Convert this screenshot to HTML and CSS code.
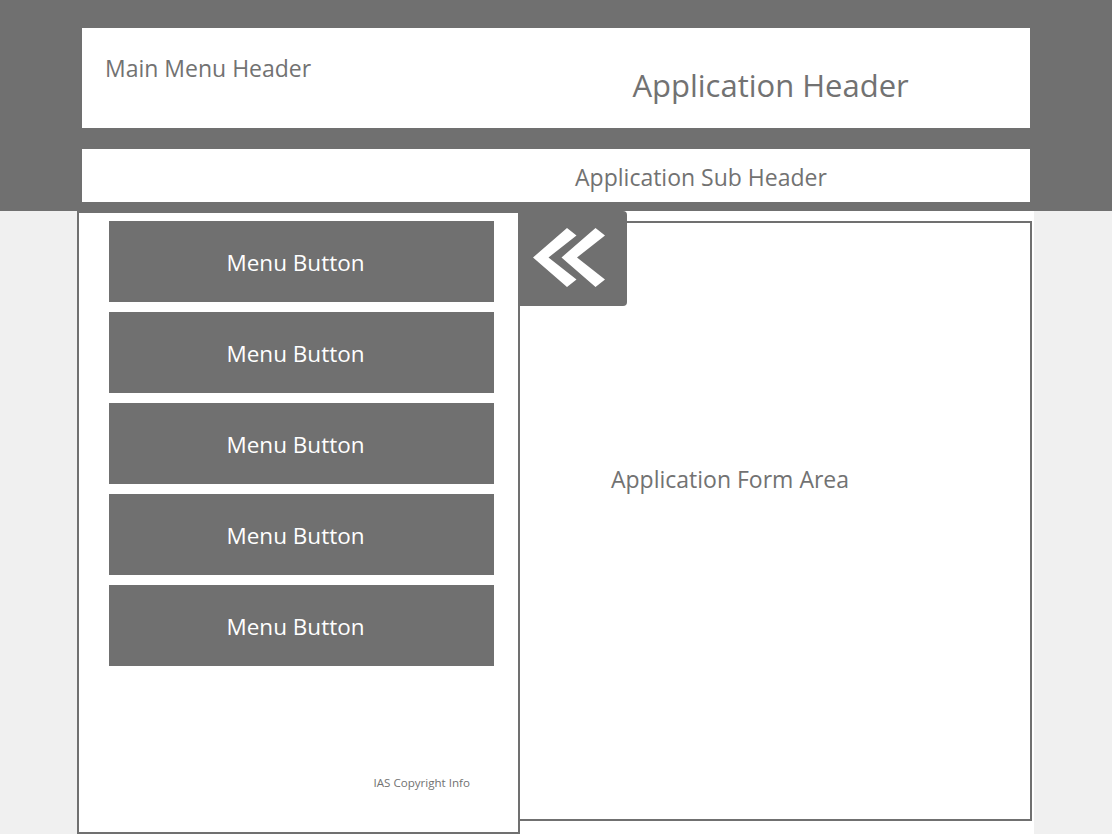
FILE: index.html
```html
<!DOCTYPE html>
<html lang="en">
<head>
<meta charset="utf-8">
<title>Application</title>
<link rel="stylesheet" href="styles.css">
</head>
<body>
<div class="top-band">
  <header class="main-header">
    <div class="menu-title">Main Menu Header</div>
    <div class="app-title">Application Header</div>
  </header>
  <div class="sub-header">Application Sub Header</div>
</div>
<div class="workspace">
  <nav class="menu-panel">
    <div class="menu-list">
      <button class="menu-btn">Menu Button</button>
      <button class="menu-btn">Menu Button</button>
      <button class="menu-btn">Menu Button</button>
      <button class="menu-btn">Menu Button</button>
      <button class="menu-btn">Menu Button</button>
    </div>
    <div class="copyright">IAS Copyright Info</div>
  </nav>
  <div class="form-wrap">
    <button class="collapse-btn" aria-label="Collapse menu">
      <svg width="108" height="95" viewBox="0 0 108 95">
        <polygon points="14,46.5 48,17 57.5,24.5 29.5,46.5 57.5,68.5 48,76" fill="#ffffff"/>
        <polygon points="42.5,46.5 76.5,17 86,24.5 58,46.5 86,68.5 76.5,76" fill="#ffffff"/>
      </svg>
    </button>
    <main class="form-area">
      <div class="form-label">Application Form Area</div>
    </main>
  </div>
</div>
</body>
</html>
```
FILE: styles.css
```css
html, body {
  margin: 0;
  padding: 0;
}
body {
  background: #f0f0f0;
  font-family: "Open Sans", "Noto Sans", sans-serif;
  color: #727272;
  width: 1112px;
  height: 834px;
  overflow: hidden;
}
.top-band {
  background: #707070;
  height: 211px;
  box-sizing: border-box;
  padding: 28px 82px 0 82px;
}
.main-header {
  background: #ffffff;
  height: 100px;
  display: flex;
}
.menu-title {
  font-size: 23px;
  line-height: 30px;
  padding: 25px 0 0 23px;
  white-space: nowrap;
}
.app-title {
  flex: 1;
  font-size: 31px;
  line-height: 40px;
  text-align: center;
  padding-top: 37px;
  padding-left: 200px;
  white-space: nowrap;
}
.sub-header {
  background: #ffffff;
  height: 53px;
  margin-top: 21px;
  box-sizing: border-box;
  font-size: 23px;
  line-height: 30px;
  padding: 13px 0 0 290px;
  text-align: center;
}
.workspace {
  display: flex;
  margin-left: 77px;
  width: 957px;
  height: 623px;
  background: #ffffff;
}
.menu-panel {
  width: 443px;
  height: 623px;
  box-sizing: border-box;
  border: 2px solid #707070;
  background: #ffffff;
  display: flex;
  flex-direction: column;
  padding: 8px 25px 0 30px;
}
.menu-list {
  display: flex;
  flex-direction: column;
  gap: 10px;
}
.menu-btn {
  width: 385px;
  height: 81px;
  border: none;
  background: #707070;
  color: #ffffff;
  font-family: "Open Sans", "Noto Sans", sans-serif;
  font-size: 22.5px;
  padding: 2px 12px 0 0;
  margin: 0;
  text-align: center;
}
.copyright {
  margin-top: auto;
  margin-bottom: 41px;
  font-size: 11.6px;
  line-height: 16px;
  text-align: right;
  padding-right: 23px;
}
.form-wrap {
  position: relative;
  width: 514px;
  padding-top: 10px;
  box-sizing: border-box;
}
.form-area {
  margin-left: -2px;
  width: 514px;
  height: 600px;
  box-sizing: border-box;
  border: 2px solid #707070;
  background: #ffffff;
  display: flex;
  flex-direction: column;
  padding: 241px 90px 0 0;
}
.form-label {
  font-size: 23px;
  line-height: 30px;
  text-align: center;
}
.collapse-btn {
  position: absolute;
  left: -1px;
  top: 0;
  width: 108px;
  height: 95px;
  border: none;
  padding: 0;
  margin: 0;
  background: #707070;
  border-radius: 0 4px 4px 0;
  display: block;
}
.collapse-btn svg {
  display: block;
}
```
